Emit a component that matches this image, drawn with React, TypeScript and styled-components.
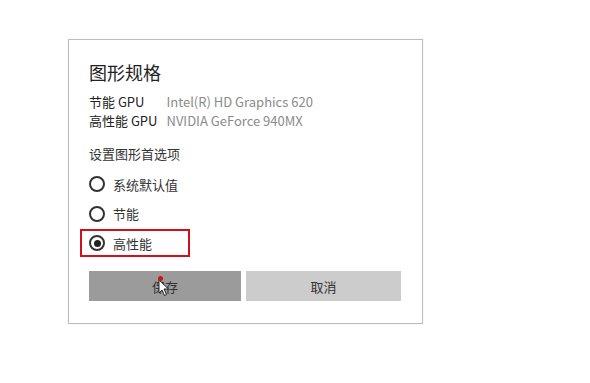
import styled, { createGlobalStyle } from 'styled-components';

const GlobalStyle = createGlobalStyle`
  html, body {
    margin: 0;
    padding: 0;
    background: #ffffff;
  }
  body {
    font-family: "Noto Sans CJK SC", "Noto Sans", "Liberation Sans", sans-serif;
    color: #222;
  }
`;

const options = ['系统默认值', '节能', '高性能'];
const selected = 2;

function App() {
  return (
    <>
      <GlobalStyle />
      <Page>
        <Dialog>
          <Title>图形规格</Title>
          <GpuTable>
            <GpuLabel>节能 GPU</GpuLabel>
            <GpuValue>Intel(R) HD Graphics 620</GpuValue>
            <GpuLabel>高性能 GPU</GpuLabel>
            <GpuValue>NVIDIA GeForce 940MX</GpuValue>
          </GpuTable>
          <SectionLabel>设置图形首选项</SectionLabel>
          <RadioList>
            {options.map((label, index) => (
              <RadioRow key={label} $highlight={index === selected}>
                <RadioCircle $checked={index === selected} />
                <RadioText>{label}</RadioText>
              </RadioRow>
            ))}
          </RadioList>
          <Buttons>
            <Button $primary>
              保存
              <Cursor viewBox="0 0 12 18" width="12" height="18">
                <path d="M1 1 L1 14 L4 11 L6.5 16.5 L8.5 15.5 L6 10 L10.5 10 Z" fill="#fff" stroke="#222" strokeWidth="1" />
              </Cursor>
              <ClickDot />
            </Button>
            <Button>取消</Button>
          </Buttons>
        </Dialog>
      </Page>
    </>
  );
}

export default App;

const Page = styled.div`
  width: 590px;
  height: 383px;
  padding: 39px 0 0 68px;
  box-sizing: border-box;
`;

const Dialog = styled.div`
  width: 355px;
  height: 285px;
  box-sizing: border-box;
  border: 1px solid #bdbdbd;
  box-shadow: 0 0 1px rgba(0, 0, 0, 0.15);
  padding: 20px 20px 0 20px;
  display: flex;
  flex-direction: column;
`;

const Title = styled.div`
  font-size: 18px;
  line-height: 24px;
  color: #222;
  margin-bottom: 8px;
`;

const GpuTable = styled.div`
  display: grid;
  grid-template-columns: max-content max-content;
  column-gap: 9px;
  font-size: 13px;
  line-height: 19px;
`;

const GpuLabel = styled.span`
  color: #222;
`;

const GpuValue = styled.span`
  color: #8a8a8a;
`;

const SectionLabel = styled.div`
  font-size: 13px;
  line-height: 20px;
  color: #333;
  margin-top: 14px;
`;

const RadioList = styled.div`
  display: flex;
  flex-direction: column;
  gap: 1.5px;
  margin: 6px 0 0 -9px;
`;

const RadioRow = styled.div<{ $highlight?: boolean }>`
  width: 110px;
  height: 28px;
  box-sizing: border-box;
  border: 2px solid ${(p) => (p.$highlight ? '#d0101a' : 'transparent')};
  display: flex;
  align-items: center;
  padding-left: 7px;
  gap: 8px;
`;

const RadioCircle = styled.span<{ $checked?: boolean }>`
  width: 16px;
  height: 16px;
  box-sizing: border-box;
  border-radius: 50%;
  border: 2px solid #333;
  display: flex;
  align-items: center;
  justify-content: center;

  &::after {
    content: '';
    display: ${(p) => (p.$checked ? 'block' : 'none')};
    width: 7px;
    height: 7px;
    border-radius: 50%;
    background: #222;
  }
`;

const RadioText = styled.span`
  font-size: 13px;
  color: #333;
`;

const Buttons = styled.div`
  display: flex;
  gap: 5px;
  margin-top: 14px;
  width: 312px;
`;

const Button = styled.div<{ $primary?: boolean }>`
  position: relative;
  flex: ${(p) => (p.$primary ? '0 0 152px' : '1')};
  height: 30px;
  display: flex;
  align-items: center;
  justify-content: center;
  background: ${(p) => (p.$primary ? '#9b9b9b' : '#cccccc')};
  color: #333;
  font-size: 13px;
`;

const Cursor = styled.svg`
  position: absolute;
  left: 69px;
  top: 8px;
`;

const ClickDot = styled.span`
  position: absolute;
  left: 69px;
  top: 5px;
  width: 5px;
  height: 5px;
  border-radius: 50%;
  background: #d0101a;
`;
